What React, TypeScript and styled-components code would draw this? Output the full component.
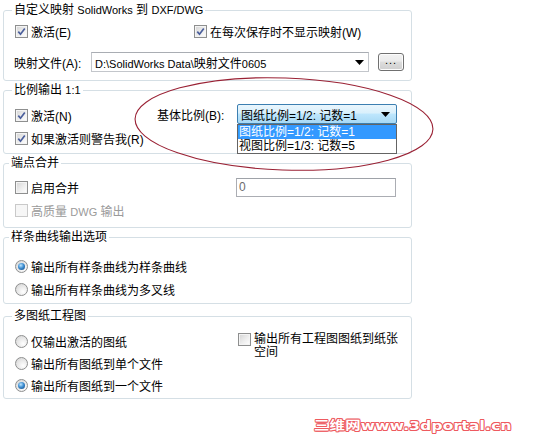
import styled, { createGlobalStyle } from 'styled-components';

const GlobalStyle = createGlobalStyle`
    html, body {
        margin: 0;
        padding: 0;
        background: #ffffff;
    }
    body {
        font-family: "Liberation Sans", "Noto Sans CJK SC", sans-serif;
        font-size: 12px;
        color: #000;
    }
`;

const Page = styled.div`
    position: relative;
    width: 534px;
    height: 441px;
    overflow: hidden;
    background: #fff;
`;

const Column = styled.div`
    width: 409px;
    padding: 2px 0 0 3px;
`;

const Group = styled.fieldset<{ $gap?: number }>`
    margin: 0 0 ${(p) => p.$gap ?? 1}px 0;
    padding: 0;
    border: 1px solid #d5dfe5;
    border-radius: 3px;
    min-width: 0;
`;

const Legend = styled.legend<{ $left?: number }>`
    margin-left: ${(p) => p.$left ?? 8}px;
    padding: 0 2px;
    height: 16px;
    line-height: 16px;
    white-space: nowrap;
`;

const Latin = styled.span`
    font-size: 11px;
`;

const Label = styled.label<{ $disabled?: boolean }>`
    display: flex;
    align-items: center;
    gap: 3px;
    height: 100%;
    white-space: nowrap;
    color: ${(p) => (p.$disabled ? '#9a9a9a' : '#000')};
`;

const Box = styled.span<{ $disabled?: boolean }>`
    flex: none;
    box-sizing: border-box;
    width: 13px;
    height: 13px;
    border: 1px solid ${(p) => (p.$disabled ? '#c9c9c9' : '#8e8f8f')};
    background: ${(p) =>
        p.$disabled ? '#f6f6f6' : 'linear-gradient(135deg, #d3d3d3 0%, #eeeeee 55%, #ffffff 100%)'};
    box-shadow: inset 0 0 0 1px ${(p) => (p.$disabled ? '#f6f6f6' : '#f4f4f4')};
    display: inline-flex;
    align-items: center;
    justify-content: center;
`;

const Round = styled.span<{ $on?: boolean }>`
    flex: none;
    box-sizing: border-box;
    width: 13px;
    height: 13px;
    border-radius: 50%;
    border: 1px solid #8e8f8f;
    background: radial-gradient(circle at 65% 70%, #ffffff 0%, #e4e4e4 60%, #cfcfcf 100%);
    display: inline-flex;
    align-items: center;
    justify-content: center;
    &::after {
        content: '';
        display: ${(p) => (p.$on ? 'block' : 'none')};
        width: 7px;
        height: 7px;
        border-radius: 50%;
        background: radial-gradient(circle at 40% 35%, #bfe6ff 0%, #3f8fd2 45%, #0d3f78 100%);
    }
`;

function Check({ checked, disabled, children }: { checked?: boolean; disabled?: boolean; children: React.ReactNode }) {
    return (
        <Label $disabled={disabled}>
            <Box $disabled={disabled}>
                {checked && (
                    <svg width="9" height="9" viewBox="0 0 9 9">
                        <path d="M1.3 4.6 L3.5 7.2 L7.8 1.4" fill="none" stroke="#4b5f9c" strokeWidth="1.7" />
                    </svg>
                )}
            </Box>
            <span>{children}</span>
        </Label>
    );
}

function Radio({ on, children }: { on?: boolean; children: React.ReactNode }) {
    return (
        <Label>
            <Round $on={on} />
            <span>{children}</span>
        </Label>
    );
}

const Arrow = () => (
    <svg width="9" height="5" viewBox="0 0 9 5">
        <path d="M0 0 H9 L4.5 5 Z" fill="#000" />
    </svg>
);

/* ---- box 1: custom map ---- */
const MapBody = styled.div`
    padding: 2px 7px 8px 11px;
    display: grid;
    row-gap: 10px;
`;

const MapChecks = styled.div`
    display: grid;
    grid-template-columns: 179px auto;
    height: 22px;
`;

const FileRow = styled.div`
    display: flex;
    align-items: center;
    height: 20px;
    margin-left: -1px;
`;

const FileLabel = styled.span`
    width: 77px;
    flex: none;
`;

const Combo = styled.div`
    box-sizing: border-box;
    width: 278px;
    height: 20px;
    border: 1px solid #c3c6cb;
    border-top-color: #a9adb3;
    background: #fff;
    display: flex;
    align-items: center;
    justify-content: space-between;
    padding: 0 4px 0 3px;
`;

const Browse = styled.button`
    box-sizing: border-box;
    width: 26px;
    height: 18px;
    margin-left: 9px;
    padding: 0 0 4px;
    border: 1px solid #707070;
    border-radius: 3px;
    background: linear-gradient(#f2f2f2 0%, #ebebeb 45%, #dddddd 50%, #cfcfcf 100%);
    box-shadow: inset 0 0 0 1px #fcfcfc;
    font-family: "Liberation Sans", sans-serif;
    font-size: 11px;
    line-height: 10px;
    color: #000;
    letter-spacing: 1px;
`;

/* ---- box 2: scale ---- */
const ScaleBody = styled.div`
    display: flex;
    padding: 6px 0 3px 11px;
`;

const LeftStack = styled.div<{ $width: number; $row: number }>`
    width: ${(p) => p.$width}px;
    flex: none;
    display: grid;
    grid-auto-rows: ${(p) => p.$row}px;
`;

const BaseScale = styled.div`
    display: flex;
    align-items: center;
    height: 20px;
`;

const BaseLabel = styled.span`
    width: 80px;
    flex: none;
`;

const ComboWrap = styled.div`
    position: relative;
`;

const HotCombo = styled.div`
    box-sizing: border-box;
    width: 160px;
    height: 20px;
    border: 1px solid #3c7fb1;
    border-radius: 2px;
    background: linear-gradient(#eaf6fd 0%, #d9f0fc 45%, #bee6fd 50%, #a7d9f5 100%);
    display: flex;
    align-items: center;
    justify-content: space-between;
    padding: 0 6px 0 3px;
    white-space: nowrap;
`;

const DropList = styled.ul`
    position: absolute;
    top: 20px;
    left: 0;
    box-sizing: border-box;
    width: 160px;
    margin: 0;
    padding: 0;
    list-style: none;
    border: 1px solid #646464;
    background: #fff;
    z-index: 2;
`;

const Option = styled.li<{ $active?: boolean }>`
    height: 14px;
    line-height: 14px;
    padding-left: 1px;
    white-space: nowrap;
    background: ${(p) => (p.$active ? '#3399ff' : '#fff')};
    color: ${(p) => (p.$active ? '#fff' : '#000')};
`;

/* ---- box 3: merge ---- */
const MergeBody = styled.div`
    display: grid;
    grid-template-columns: 221px 160px;
    grid-auto-rows: 23px;
    padding: 5px 0 5px 11px;
`;

const ValueInput = styled.div`
    align-self: center;
    box-sizing: border-box;
    height: 19px;
    border: 1px solid #abadb3;
    border-top-color: #9ea2a8;
    padding-left: 2px;
    line-height: 17px;
    color: #6d6d6d;
    background: #fff;
`;

/* ---- box 4: spline ---- */
const SplineBody = styled.div`
    display: grid;
    grid-auto-rows: 23px;
    padding: 10px 0 2px 11px;
`;

/* ---- box 5: sheets ---- */
const SheetBody = styled.div`
    display: grid;
    grid-template-columns: 223px 1fr;
    padding: 6px 0 2px 11px;
`;

const SpaceCheck = styled.div`
    display: flex;
    align-items: flex-start;
    gap: 3px;
    margin-top: 3px;
`;

const WrapText = styled.span`
    width: 146px;
    line-height: 13px;
`;

/* ---- overlays ---- */
const Mark = styled.svg`
    position: absolute;
    left: 0;
    top: 0;
    pointer-events: none;
    z-index: 3;
`;

const Watermark = styled.div`
    position: absolute;
    left: 314px;
    top: 419px;
    transform: scaleX(1.28);
    transform-origin: left top;
    font-family: "DejaVu Sans", "Noto Sans CJK SC", sans-serif;
    font-weight: bold;
    font-size: 12px;
    line-height: 14px;
    color: #fff;
    white-space: nowrap;
    letter-spacing: 0.2px;
    text-shadow:
        0.8px 0 0 #ee5a5f, -0.8px 0 0 #ee5a5f, 0 0.8px 0 #ee5a5f, 0 -0.8px 0 #ee5a5f,
        0.6px 0.6px 0 #ee5a5f, -0.6px -0.6px 0 #ee5a5f, 0.6px -0.6px 0 #ee5a5f, -0.6px 0.6px 0 #ee5a5f;
`;

export default function App() {
    return (
        <>
            <GlobalStyle />
            <Page>
                <Column>
                    <Group>
                        <Legend>
                            自定义映射 <Latin>SolidWorks</Latin> 到 <Latin>DXF/DWG</Latin>
                        </Legend>
                        <MapBody>
                            <MapChecks>
                                <Check checked>激活(E)</Check>
                                <Check checked>在每次保存时不显示映射(W)</Check>
                            </MapChecks>
                            <FileRow>
                                <FileLabel>映射文件(A):</FileLabel>
                                <Combo>
                                    <span>
                                        <Latin>D:\SolidWorks Data\</Latin>映射文件<Latin>0605</Latin>
                                    </span>
                                    <Arrow />
                                </Combo>
                                <Browse>...</Browse>
                            </FileRow>
                        </MapBody>
                    </Group>

                    <Group>
                        <Legend>
                            比例输出 <Latin>1:1</Latin>
                        </Legend>
                        <ScaleBody>
                            <LeftStack $width={142} $row={23}>
                                <Check checked>激活(N)</Check>
                                <Check checked>如果激活则警告我(R)</Check>
                            </LeftStack>
                            <BaseScale>
                                <BaseLabel>基体比例(B):</BaseLabel>
                                <ComboWrap>
                                    <HotCombo>
                                        <span>图纸比例=1/2: 记数=1</span>
                                        <Arrow />
                                    </HotCombo>
                                    <DropList>
                                        <Option $active>图纸比例=1/2: 记数=1</Option>
                                        <Option>视图比例=1/3: 记数=5</Option>
                                    </DropList>
                                </ComboWrap>
                            </BaseScale>
                        </ScaleBody>
                    </Group>

                    <Group>
                        <Legend $left={5}>端点合并</Legend>
                        <MergeBody>
                            <Check>启用合并</Check>
                            <ValueInput>0</ValueInput>
                            <Check disabled>
                                高质量 <Latin>DWG</Latin> 输出
                            </Check>
                        </MergeBody>
                    </Group>

                    <Group $gap={4}>
                        <Legend $left={5}>样条曲线输出选项</Legend>
                        <SplineBody>
                            <Radio on>输出所有样条曲线为样条曲线</Radio>
                            <Radio>输出所有样条曲线为多叉线</Radio>
                        </SplineBody>
                    </Group>

                    <Group>
                        <Legend>多图纸工程图</Legend>
                        <SheetBody>
                            <LeftStack $width={223} $row={22}>
                                <Radio>仅输出激活的图纸</Radio>
                                <Radio>输出所有图纸到单个文件</Radio>
                                <Radio on>输出所有图纸到一个文件</Radio>
                            </LeftStack>
                            <SpaceCheck>
                                <Box />
                                <WrapText>输出所有工程图图纸到纸张空间</WrapText>
                            </SpaceCheck>
                        </SheetBody>
                    </Group>
                </Column>

                <Mark width="534" height="441" viewBox="0 0 534 441">
                    <ellipse
                        cx="284"
                        cy="124"
                        rx="149"
                        ry="46"
                        transform="rotate(2 284 124)"
                        fill="none"
                        stroke="#9a2134"
                        strokeWidth="1.1"
                    />
                </Mark>

                <Watermark>三维网www.3dportal.cn</Watermark>
            </Page>
        </>
    );
}
